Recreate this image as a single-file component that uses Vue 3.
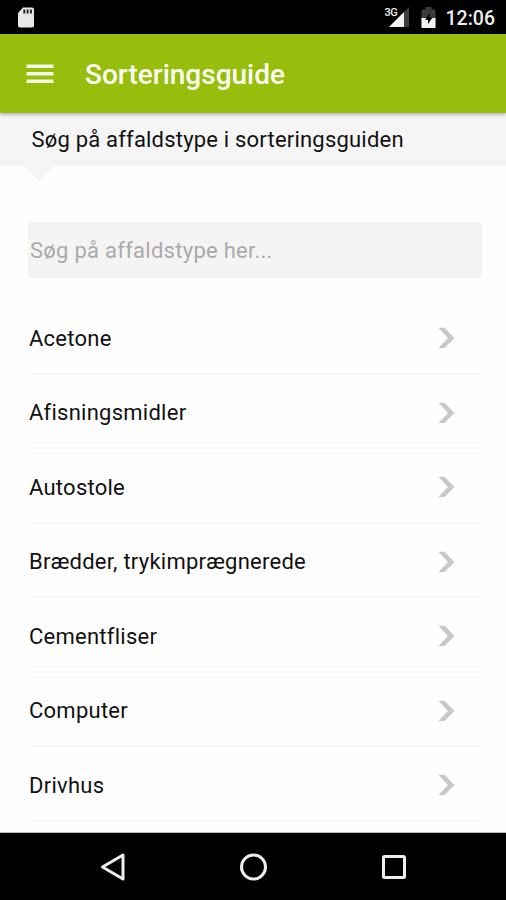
<script setup>
import { computed, ref } from 'vue';

const search = ref('');
const wasteTypes = [
  'Acetone',
  'Afisningsmidler',
  'Autostole',
  'Brædder, trykimprægnerede',
  'Cementfliser',
  'Computer',
  'Drivhus',
];

const filtered = computed(() =>
  wasteTypes.filter((type) => type.toLowerCase().includes(search.value.toLowerCase()))
);
</script>

<template>
  <div class="screen">
    <div class="status">
      <svg class="sd" width="18" height="22" viewBox="0 0 18 22">
        <path d="M6 .5h9a2 2 0 0 1 2 2v16a2 2 0 0 1-2 2H3a2 2 0 0 1-2-2V6z" fill="#e8e8e8" />
        <path d="M7.300 2.500v4M10.600 2.500v4M13.900 2.500v4" stroke="#222" stroke-width="1.900" />
      </svg>
      <div class="status-right">
        <div class="signal">
          <span class="network">3G</span>
          <svg width="21" height="20" viewBox="0 0 21 20">
            <path d="M21 0v20H1z" fill="#3c3c3c" />
            <path d="M16 5v15H1z" fill="#f2f2f2" />
          </svg>
        </div>
        <svg class="battery" width="15" height="22" viewBox="0 0 15 22">
          <path d="M4.500 0h6v2.500H13.500a1 1 0 0 1 1 1V20a1 1 0 0 1-1 1H1.500a1 1 0 0 1-1-1V3.500a1 1 0 0 1 1-1h3z" fill="#3c3c3c" />
          <path d="M.5 11h14v9a1 1 0 0 1-1 1h-12a1 1 0 0 1-1-1z" fill="#f2f2f2" />
          <path d="M8.500 6L4 12.800h3V17l4.500-6.500h-3z" fill="#000" />
        </svg>
        <span class="clock">12:06</span>
      </div>
    </div>

    <header class="toolbar">
      <svg class="menu" width="28" height="20" viewBox="0 0 28 20">
        <path d="M.5 2.200h27M.5 9.700h27M.5 17.200h27" stroke="#f6fbe6" stroke-width="3.400" />
      </svg>
      <h1>Sorteringsguide</h1>
    </header>

    <main>
      <p class="intro"><span>Søg på affaldstype i sorteringsguiden</span></p>
      <input v-model="search" class="search" type="text" placeholder="Søg på affaldstype her..." />
      <ul class="list">
        <li v-for="type in filtered" :key="type">
          <span>{{ type }}</span>
          <svg width="18" height="22" viewBox="0 0 18 22">
            <path d="M.5 .8h6L16.500 11 6.500 21h-6l9.500-10z" fill="#c8c8c8" />
          </svg>
        </li>
      </ul>
    </main>

    <nav class="navbar">
      <svg width="28" height="30" viewBox="0 0 28 30">
        <path d="M24 3v24L3.500 15z" fill="none" stroke="#eee" stroke-width="3" stroke-linejoin="round" />
      </svg>
      <svg width="28" height="30" viewBox="0 0 28 30">
        <circle cx="13.500" cy="15" r="12" fill="none" stroke="#eee" stroke-width="3" />
      </svg>
      <svg width="28" height="30" viewBox="0 0 28 30">
        <rect x="3.500" y="4.500" width="21" height="21" rx="1" fill="none" stroke="#eee" stroke-width="3" />
      </svg>
    </nav>
  </div>
</template>

<style>
body {
  margin: 0;
  overflow: hidden;
}
</style>

<style scoped>
.screen {
  display: flex;
  flex-direction: column;
  width: 506px;
  height: 900px;
  overflow: hidden;
  background: #fefefe;
  color: #111;
  font-family: Roboto, "Noto Sans", sans-serif;
}
.status {
  display: flex;
  justify-content: space-between;
  flex: 0 0 34px;
  box-sizing: border-box;
  padding: 7px 11px 0 17px;
  background: #000;
}
.status-right {
  display: flex;
}
.signal {
  position: relative;
  margin-right: 12px;
}
.network {
  position: absolute;
  top: 0;
  left: -3px;
  color: #eee;
  font-size: 11px;
  font-weight: 500;
  line-height: 11px;
  letter-spacing: -0.5px;
}
.battery {
  margin-right: 10px;
}
.clock {
  color: #eee;
  font-size: 19.5px;
  font-weight: 500;
  line-height: 23px;
}
.toolbar {
  position: relative;
  z-index: 1;
  display: flex;
  align-items: center;
  flex: 0 0 79px;
  box-sizing: border-box;
  padding-left: 26px;
  background: #97bd0d;
  box-shadow: 0 1px 4px rgba(40, 40, 70, 0.45);
}
h1 {
  margin: 2px 0 0 31px;
  color: #fbfdf2;
  font-size: 28px;
  font-weight: 500;
  line-height: 36px;
}
main {
  flex: 1;
  min-height: 0;
  overflow: hidden;
  border-bottom: 1px solid #bbb;
}
.intro {
  position: relative;
  height: 53px;
  margin: 0;
  padding-left: 31.5px;
  box-sizing: border-box;
  background: #f5f5f5;
  font-size: 22px;
  letter-spacing: 0.2px;
  line-height: 53px;
}
.intro::after {
  content: "";
  position: absolute;
  top: 53px;
  left: 24px;
  border: 15px solid transparent;
  border-top-color: #f5f5f5;
  border-bottom: 0;
}
.search {
  display: block;
  width: 454px;
  height: 56px;
  margin: 56px 0 22px 28px;
  padding: 0 2px;
  box-sizing: border-box;
  border: 0;
  border-radius: 2px;
  outline: none;
  background: #f4f4f4;
  color: #111;
  font: 22px Roboto, "Noto Sans", sans-serif;
  letter-spacing: 0.27px;
}
.search::placeholder {
  color: #aaa;
}
.list {
  margin: 0 26px 0 28px;
  padding: 0;
  list-style: none;
}
li {
  display: flex;
  align-items: center;
  justify-content: space-between;
  height: 74.5px;
  box-sizing: border-box;
  padding: 4px 24px 0 1px;
  border-bottom: 2px solid #f8f8f8;
  font-size: 22px;
  letter-spacing: 0.25px;
}
.navbar {
  display: flex;
  align-items: center;
  justify-content: space-between;
  flex: 0 0 67px;
  box-sizing: border-box;
  padding: 0 98px 0 99px;
  background: #000;
}
</style>
